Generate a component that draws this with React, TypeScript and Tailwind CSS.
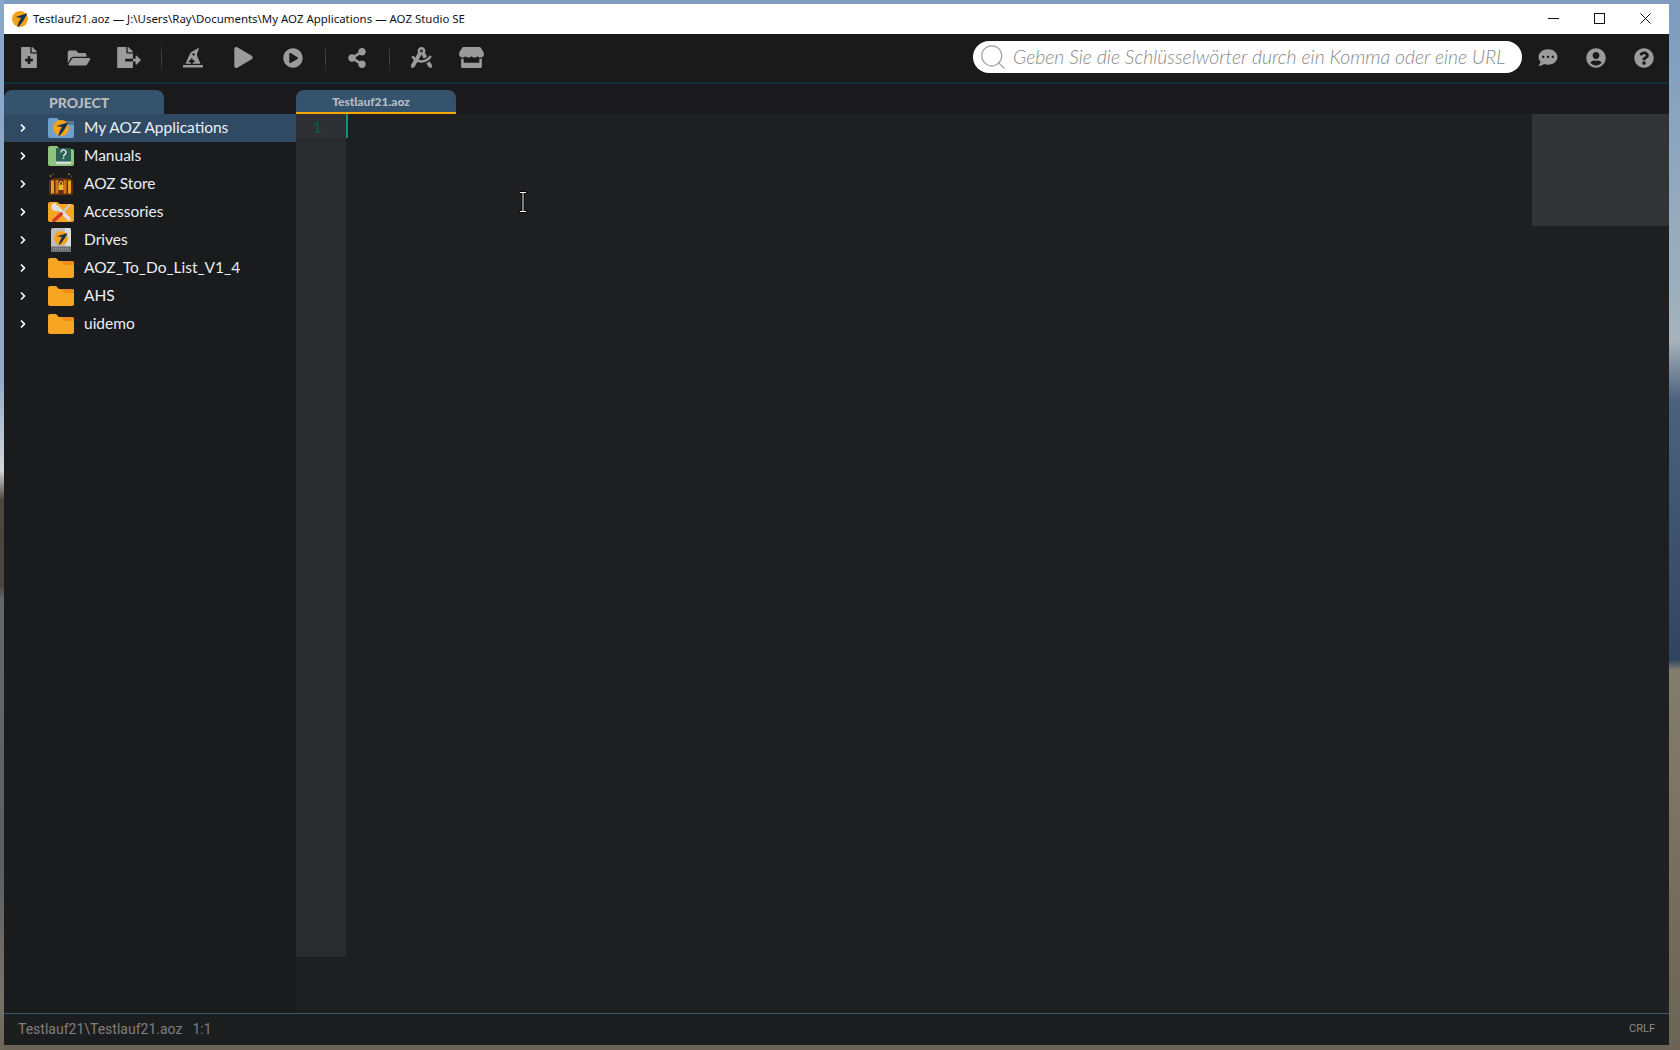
import React from "react";
import { ChevronRight, Search } from "lucide-react";
import {
  FaCommentDots,
  FaDraftingCompass,
  FaFileExport,
  FaFileMedical,
  FaFolderOpen,
  FaHatWizard,
  FaPlay,
  FaPlayCircle,
  FaQuestionCircle,
  FaShareAlt,
  FaStore,
  FaUserCircle,
} from "react-icons/fa";

const AozMark: React.FC<{ size: number }> = ({ size }) => (
  <svg width={size} height={size} viewBox="0 0 16 16">
    <circle cx="8" cy="8" r="8" fill="#f5a31c" />
    <path d="M3.5 6 L15.4 2.2 C13.4 7 10 12 6.2 16 L5.4 15.6 C6.2 12.4 7.4 9.6 9 7 Z" fill="#16324f" />
  </svg>
);

const FolderIcon: React.FC = () => (
  <svg width="26" height="20" viewBox="0 0 26 20">
    <path d="M0 2 a2 2 0 0 1 2-2 h6 l3 3 h13 a2 2 0 0 1 2 2 v13 a2 2 0 0 1-2 2 H2 a2 2 0 0 1-2-2 Z" fill="#f6a623" />
    <path d="M13 3 h11 a2 2 0 0 1 2 2 v2 h-9 Z" fill="#f08a1d" />
  </svg>
);

const AppsIcon: React.FC = () => (
  <div className="relative h-5 w-[26px]">
    <svg width="26" height="20" viewBox="0 0 26 20">
      <path d="M0 2 a2 2 0 0 1 2-2 h7 l3 3 h12 a2 2 0 0 1 2 2 v13 a2 2 0 0 1-2 2 H2 a2 2 0 0 1-2-2 Z" fill="#6f9fcb" />
      <path d="M12 3 h12 a2 2 0 0 1 2 2 v2 h-10 Z" fill="#55799b" />
    </svg>
    <div className="absolute left-[5px] top-[2px]">
      <AozMark size={16} />
    </div>
  </div>
);

const ManualsIcon: React.FC = () => (
  <svg width="26" height="20" viewBox="0 0 26 20">
    <path d="M0 2 a2 2 0 0 1 2-2 h7 l3 3 h12 a2 2 0 0 1 2 2 v13 a2 2 0 0 1-2 2 H2 a2 2 0 0 1-2-2 Z" fill="#8fc47e" />
    <rect x="8" y="2" width="15" height="15" rx="1" fill="#2f6256" />
    <rect x="8" y="15.5" width="15" height="2.5" fill="#d5ddd8" />
    <path d="M13 6.4 a2.5 2.5 0 1 1 3.8 2.1 c-1 .6-1.3 1-1.3 1.9 M15.5 11.4 v1.6" fill="none" stroke="#d8e6df" strokeWidth="1.5" />
  </svg>
);

const StoreIcon: React.FC = () => (
  <svg width="26" height="23" viewBox="0 0 26 23">
    <path d="M1 10 Q1 5 7 5 H19 Q25 5 25 10 V21 Q25 22 24 22 H2 Q1 22 1 21 Z" fill="#5e2f10" />
    <path d="M3 7.5 h3 v13 h-3 Z M20 7.5 h3 v13 h-3 Z" fill="#e8a11f" />
    <path d="M7.5 7 h3 v13.5 h-3 Z M15.5 7 h3 v13.5 h-3 Z" fill="#c9761a" />
    <rect x="10.5" y="11.5" width="5" height="5.5" rx="0.8" fill="#f2b632" />
    <path d="M11.5 11.5 V10 a1.5 1.5 0 0 1 3 0 V11.5" fill="none" stroke="#f2b632" />
    <circle cx="2.5" cy="3" r="0.9" fill="#b98a2c" />
    <circle cx="5" cy="1.5" r="0.7" fill="#8b6a25" />
    <circle cx="21" cy="1.2" r="0.9" fill="#b98a2c" />
    <circle cx="23.5" cy="3.2" r="0.7" fill="#8b6a25" />
  </svg>
);

const ToolsIcon: React.FC = () => (
  <svg width="26" height="20" viewBox="0 0 26 20">
    <path d="M0 2 a2 2 0 0 1 2-2 h7 l3 2 h12 a2 2 0 0 1 2 2 v14 a2 2 0 0 1-2 2 H2 a2 2 0 0 1-2-2 Z" fill="#f6a623" />
    <path d="M9 5 L21 17" stroke="#dfe2e4" strokeWidth="3.6" strokeLinecap="round" />
    <path d="M6.2 0.8 a4.4 4.4 0 0 0 -2.4 6 a4.4 4.4 0 0 0 6.6 1.4 l0 -3 l-2 -1 l-0.4 -3 Z" fill="#dfe2e4" />
    <path d="M22.5 2.5 L13 12" stroke="#c9ced2" strokeWidth="2" />
    <path d="M13 12 L6 18.5" stroke="#d5392b" strokeWidth="3.6" strokeLinecap="round" />
  </svg>
);

const DriveIcon: React.FC = () => (
  <div className="relative h-[24px] w-[20px]">
    <svg width="20" height="24" viewBox="0 0 20 24">
      <rect x="0" y="0" width="20" height="24" rx="2" fill="#bdbdbd" />
      <path d="M14 0 h4 a2 2 0 0 1 2 2 v16 h-6 Z" fill="#dcdcdc" />
      <rect x="0" y="18.5" width="20" height="5.5" fill="#6f6f6f" />
      <path d="M2 21 h16" stroke="#b5b5b5" strokeDasharray="1 1" />
    </svg>
    <div className="absolute left-[3px] top-[3px]">
      <AozMark size={14} />
    </div>
  </div>
);

const tree = [
  { label: "My AOZ Applications", icon: <AppsIcon />, selected: true },
  { label: "Manuals", icon: <ManualsIcon /> },
  { label: "AOZ Store", icon: <StoreIcon /> },
  { label: "Accessories", icon: <ToolsIcon /> },
  { label: "Drives", icon: <DriveIcon /> },
  { label: "AOZ_To_Do_List_V1_4", icon: <FolderIcon /> },
  { label: "AHS", icon: <FolderIcon /> },
  { label: "uidemo", icon: <FolderIcon /> },
];

const ToolButton: React.FC<{ children: React.ReactNode }> = ({ children }) => (
  <div className="flex h-full w-[50px] items-center justify-center text-[#9b9b9b]">{children}</div>
);

const Divider: React.FC = () => (
  <div className="ml-[7px] mr-[6px] h-[31px] w-px bg-gradient-to-b from-transparent via-[#4a4a4a] to-transparent" />
);

const SideButton: React.FC<{ children: React.ReactNode }> = ({ children }) => (
  <div className="flex h-full w-[48px] items-center justify-center text-[#9b9b9b]">{children}</div>
);

export default function App() {
  return (
    <div className="h-screen bg-[linear-gradient(to_bottom,#8aa6cb_0px,#93aac6_380px,#d5d6d8_470px,#4c463e_500px,#4a453f_585px,#66686c_600px,#5c5d60_860px,#77716a_1000px,#6d665b_1050px),linear-gradient(to_bottom,#7d9cc0_0px,#9db0bd_300px,#a8b2ba_340px,#4b627f_400px,#2f455f_660px,#857c70_670px,#6b6355_1050px)] bg-[size:4px_100%,100%_100%] bg-no-repeat pb-[5px] pl-[4px] pr-[11px] pt-[4px]">
      <div className="flex h-full flex-col overflow-hidden bg-[#1a1b1d]">
        {/* Title bar */}
        <div className="flex h-[30px] shrink-0 items-center bg-white pl-[8px]">
          <AozMark size={16} />
          <span className="ml-[5px] font-['Noto_Sans',sans-serif] text-[11.45px] text-[#10131a]">
            Testlauf21.aoz — J:\Users\Ray\Documents\My AOZ Applications — AOZ Studio SE
          </span>
          <div className="ml-auto flex h-full pb-px pr-px">
            <div className="flex w-[46px] items-center justify-center">
              <svg width="11" height="11" viewBox="0 0 11 11">
                <path d="M0 5.5 H11" stroke="#111" strokeWidth="1" />
              </svg>
            </div>
            <div className="flex w-[46px] items-center justify-center">
              <svg width="11" height="11" viewBox="0 0 11 11">
                <rect x="0.5" y="0.5" width="10" height="10" fill="none" stroke="#111" strokeWidth="1" />
              </svg>
            </div>
            <div className="flex w-[46px] items-center justify-center">
              <svg width="11" height="11" viewBox="0 0 11 11">
                <path d="M0.5 0.5 L10.5 10.5 M10.5 0.5 L0.5 10.5" stroke="#111" strokeWidth="1" />
              </svg>
            </div>
          </div>
        </div>

        {/* Toolbar */}
        <div className="flex h-[48px] shrink-0 items-center bg-[#1a1a1b] pb-px">
          <ToolButton>
            <FaFileMedical className="h-[21px] w-[16px]" />
          </ToolButton>
          <ToolButton>
            <FaFolderOpen className="h-[20px] w-[24px]" />
          </ToolButton>
          <ToolButton>
            <FaFileExport className="h-[21px] w-[24px]" />
          </ToolButton>
          <Divider />
          <ToolButton>
            <FaHatWizard className="h-[21px] w-[20px]" />
          </ToolButton>
          <ToolButton>
            <FaPlay className="h-[21px] w-[19px]" />
          </ToolButton>
          <ToolButton>
            <FaPlayCircle className="h-[20px] w-[20px]" />
          </ToolButton>
          <Divider />
          <ToolButton>
            <FaShareAlt className="h-[20px] w-[18px]" />
          </ToolButton>
          <Divider />
          <ToolButton>
            <FaDraftingCompass className="h-[21px] w-[21px]" />
          </ToolButton>
          <ToolButton>
            <FaStore className="h-[21px] w-[25px]" />
          </ToolButton>

          <div className="mb-[2px] ml-auto mr-[2px] flex h-[32px] w-[549px] items-center rounded-full bg-white pl-[5px]">
            <Search size={30} strokeWidth={1} className="text-[#a3a3a3]" />
            <span className="ml-[5px] whitespace-nowrap font-['Lato',sans-serif] text-[19.4px] font-light italic text-[#8a8a8a]">
              Geben Sie die Schlüsselwörter durch ein Komma oder eine URL
            </span>
          </div>
          <SideButton>
            <FaCommentDots className="h-[19px] w-[20px]" />
          </SideButton>
          <SideButton>
            <FaUserCircle className="h-[20px] w-[20px]" />
          </SideButton>
          <SideButton>
            <FaQuestionCircle className="h-[20px] w-[20px]" />
          </SideButton>
          <div className="w-px" />
        </div>
        <div className="h-[2px] shrink-0 bg-[#10303f]" />

        {/* Tab strip */}
        <div className="flex h-[30px] shrink-0 items-end bg-[#1a1a1c]">
          <div className="flex h-[24px] w-[160px] items-center rounded-t-[8px] bg-[#36536e] pl-[45px] font-['Lato',sans-serif] text-[14px] font-black text-[#b9bcbe]">
            PROJECT
          </div>
          <div className="ml-[132px] flex h-[24px] w-[160px] items-center justify-center rounded-t-[8px] border-b-[2px] border-[#f7a600] bg-[#36536e] pr-[10px] pt-[2px] font-['Lato',sans-serif] text-[12px] font-black text-[#b4bcc4]">
            Testlauf21.aoz
          </div>
        </div>

        <div className="flex min-h-0 flex-1">
          {/* Project tree */}
          <div className="w-[292px] shrink-0 bg-[#1a1b1d]">
            {tree.map((item) => (
              <div
                key={item.label}
                className={`flex h-[28px] items-center ${item.selected ? "bg-[#2f4a62]" : ""}`}
              >
                <ChevronRight size={12} strokeWidth={3.5} className="ml-[13px] text-white" />
                <div className="ml-[19px] flex w-[26px] justify-center">{item.icon}</div>
                <span className="ml-[10px] font-['Lato',sans-serif] text-[15.5px] text-[#eaf0f5]">
                  {item.label}
                </span>
              </div>
            ))}
          </div>

          {/* Editor */}
          <div className="relative min-w-0 flex-1 bg-[#1e1f21]">
            <div className="flex h-[843px] w-[50px] flex-col bg-[#2a2b2e]">
              <div className="h-[24px] bg-[#2f3033] pr-[24px] pt-px text-right font-['Lato',sans-serif] text-[16px] leading-[24px] text-[#0f5a50]">
                1
              </div>
            </div>
            {/* text caret */}
            <div className="absolute left-[50px] top-0 h-[24px] w-[2px] bg-[#14907f]" />
            <div className="absolute right-0 top-0 h-[112px] w-[137px] bg-[#323335]" />
            {/* mouse text cursor */}
            <svg className="absolute left-[222px] top-[77px]" width="10" height="22" viewBox="0 0 10 22">
              <path d="M1.5 1.5 H8.5 M5 1.5 V20.5 M1.5 20.5 H8.5" fill="none" stroke="#000" strokeWidth="3" />
              <path d="M2 1.5 H8 M5 1.5 V20.5 M2 20.5 H8" fill="none" stroke="#fff" strokeWidth="1" />
            </svg>
          </div>
        </div>

        {/* Status bar */}
        <div className="flex h-[32px] shrink-0 items-center border-t border-[#3a5a72] bg-[#1c1d1f] pl-[14px] pr-[14px] font-['Roboto',sans-serif] text-[14px] text-[#7f7f7f]">
          <span>Testlauf21\Testlauf21.aoz</span>
          <span className="ml-[10px]">1:1</span>
          <span className="ml-auto text-[11px] text-[#8a8a8a]">CRLF</span>
        </div>
      </div>
    </div>
  );
}
